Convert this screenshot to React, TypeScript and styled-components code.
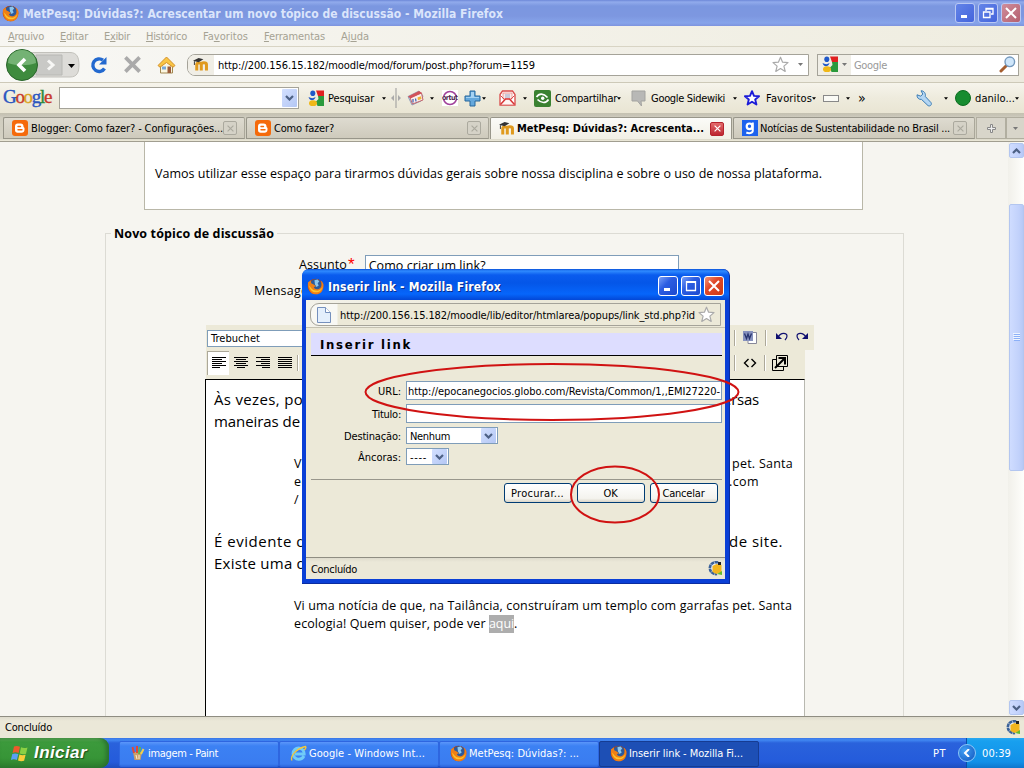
import React, { useLayoutEffect, useRef, useState } from 'react';
import styled, { createGlobalStyle, css } from 'styled-components';

const tahoma = '"DejaVu Sans Condensed", "DejaVu Sans", Tahoma, sans-serif';
const trebuchet = '"Open Sans", "Noto Sans", sans-serif';

const Global = createGlobalStyle`
  *, *::before, *::after { box-sizing: border-box; }
  body { margin: 0; overflow: hidden; font-family: ${tahoma}; font-size: 11px; color: #000; }
  svg { display: block; flex: none; }
`;

/* Text tracked at run time so that it fills a given width. */
const Label = styled.span<{ $size?: number; $bold?: boolean; $color?: string; $face?: string }>`
  display: inline-block;
  flex: none;
  white-space: pre;
  font-size: ${p => p.$size ?? 11}px;
  font-weight: ${p => (p.$bold ? 700 : 400)};
  ${p => p.$color && css`color: ${p.$color};`}
  ${p => p.$face && css`font-family: ${p.$face};`}
`;

type FitProps = {
  w: number;
  size?: number;
  bold?: boolean;
  color?: string;
  face?: string;
  className?: string;
  children: React.ReactNode;
};

function Fit({ w, size, bold, color, face, className, children }: FitProps) {
  const ref = useRef<HTMLSpanElement>(null);
  const [spacing, setSpacing] = useState(0);
  useLayoutEffect(() => {
    const el = ref.current;
    if (!el) return;
    el.style.letterSpacing = '0px';
    const natural = el.getBoundingClientRect().width;
    const next = (w - natural) / (el.textContent || ' ').length;
    el.style.letterSpacing = `${next}px`;
    setSpacing(next);
  }, [w]);
  return (
    <Label ref={ref} className={className} $size={size} $bold={bold} $color={color} $face={face}
      style={{ letterSpacing: `${spacing}px` }}>
      {children}
    </Label>
  );
}

const Spacer = styled.div<{ $w?: number }>`
  ${p => (p.$w === undefined ? 'flex: 1;' : `flex: none; width: ${p.$w}px;`)}
`;

/* ---------- main window ---------- */
const Desktop = styled.div`
  position: relative;
  width: 1024px;
  height: 768px;
  display: flex;
  flex-direction: column;
  overflow: hidden;
  background: #f5f5f0;
`;
const TitleBar = styled.header`
  height: 26px;
  flex: none;
  display: flex;
  align-items: center;
  padding: 0 3px 0 2px;
  background: linear-gradient(#6d88d8 0, #91abec 2px, #7b97e0 6px, #7d97e0 16px, #86a4ea 23px, #7d93de 26px);
`;
const TitleText = styled(Fit)`
  margin-left: 4px;
  padding-top: 1px;
`;
const WinButton = styled.span<{ $close?: boolean; $idle?: boolean }>`
  width: 20px;
  height: 20px;
  margin-left: 3px;
  flex: none;
  display: flex;
  align-items: center;
  justify-content: center;
  border: 1px solid ${p => (p.$idle ? '#b9c8f4' : '#fff')};
  border-radius: 3px;
  background: ${p =>
    p.$idle
      ? p.$close ? 'linear-gradient(135deg, #cf8d9b, #b5606f)' : 'linear-gradient(135deg, #6384e8, #4464dc)'
      : p.$close ? 'linear-gradient(135deg, #f09478, #e0492a 40%, #cc3a14)' : 'linear-gradient(135deg, #7aa0f8, #2c5de2 40%, #1c49cf)'};
`;
const MenuBar = styled.nav`
  height: 21px;
  flex: none;
  display: flex;
  align-items: center;
  gap: 16px;
  padding-left: 8px;
  background: linear-gradient(90deg, #f7f6f2, #efede0);
  border-bottom: 1px solid #d8d4c4;
`;
const NavBar = styled.div`
  height: 36px;
  flex: none;
  display: flex;
  align-items: center;
  background: linear-gradient(90deg, #f8f8f5, #edeade);
  border-bottom: 1px solid #cdc9b8;
`;
const Field = styled.div<{ $w: number; $round?: boolean }>`
  width: ${p => p.$w}px;
  height: 22px;
  flex: none;
  display: flex;
  align-items: center;
  background: #fff;
  border: 1px solid #a5a399;
  ${p => p.$round && 'border-radius: 8px 0 0 8px;'}
  overflow: hidden;
  ${Label} { padding-top: 2px; }
`;
const FavSlot = styled.div<{ $w: number }>`
  width: ${p => p.$w}px;
  height: 20px;
  flex: none;
  display: flex;
  align-items: center;
  justify-content: center;
  gap: 3px;
  background: #f0eee6;
`;
const GoogleBar = styled.div`
  height: 30px;
  flex: none;
  display: flex;
  align-items: center;
  padding-left: 3px;
  background: linear-gradient(#f6f4ec, #eeebdd 50%, #e9e5d3);
`;
const Logo = styled(Fit)`
  -webkit-text-stroke: 0.4px;
  margin-top: -3px;
`;
const Tint = styled.span<{ $c: string }>`
  color: ${p => p.$c};
`;
const TabStrip = styled.div`
  height: 29px;
  flex: none;
  display: flex;
  align-items: flex-end;
  padding: 0 0 2px 3px;
  background: linear-gradient(#c4c1b1 0, #c9c6b8 3px, #d0cdbf 4px, #d4d1c3 26px, #e9e6d6 27px);
  border-bottom: 1px solid #a19e90;
`;
const Tab = styled.div<{ $w: number; $active?: boolean }>`
  width: ${p => p.$w}px;
  height: 22px;
  flex: none;
  display: flex;
  align-items: center;
  padding: 0 6px 0 8px;
  border: 1px solid #98968a;
  border-bottom-width: ${p => (p.$active ? 0 : 1)}px;
  border-right-color: ${p => (p.$active ? '#98968a' : '#aaa79a')};
  border-radius: 2px 2px 0 0;
  margin-right: 1px;
  background: ${p => (p.$active ? 'linear-gradient(#fbfbf8, #f1efe5)' : 'linear-gradient(#dedbd0, #cecabc)')};
`;
const TabClose = styled.span<{ $active?: boolean }>`
  width: 14px;
  height: 14px;
  flex: none;
  display: flex;
  align-items: center;
  justify-content: center;
  margin-right: 1px;
  border: 1px solid ${p => (p.$active ? '#b5232c' : '#aba99e')};
  border-radius: 2px;
  background: ${p => (p.$active ? 'linear-gradient(#e36b6b, #bd2530)' : '#d5d2c7')};
`;
const StripButton = styled.div<{ $w: number }>`
  width: ${p => p.$w}px;
  height: 22px;
  flex: none;
  display: flex;
  align-items: center;
  justify-content: center;
  border: 1px solid #b1aea0;
  background: #d8d5ca;
`;

/* ---------- page ---------- */
const View = styled.main`
  height: 574px;
  flex: none;
  display: flex;
  overflow: hidden;
`;
const Page = styled.div`
  width: 1008px;
  height: 574px;
  overflow: hidden;
  background: #f6f5f0;
`;
const Intro = styled.section`
  width: 719px;
  height: 68px;
  margin-left: 144px;
  padding: 23px 0 0 10px;
  background: #fff;
  border: 1px solid #b9b7a8;
  border-top: 0;
`;
const Fieldset = styled.fieldset`
  width: 799px;
  height: 540px;
  margin: 15px 0 0 105px;
  padding: 0;
  border: 1px solid #dcdbd4;
`;
const Legend = styled.legend`
  height: 17px;
  margin-left: 5px;
  padding: 0 3px;
  line-height: 17px;
`;
const FormRow = styled.div<{ $pad: number; $h: number }>`
  display: flex;
  align-items: center;
  height: ${p => p.$h}px;
  padding-left: ${p => p.$pad}px;
`;
const Subject = styled.div`
  width: 314px;
  height: 21px;
  margin: 3px 0 0 10px;
  padding-left: 3px;
  line-height: 19px;
  border: 1px solid #7f9db9;
  background: #fff;
`;
const Star = styled.span`
  color: #f00;
  font: 17px/17px "Liberation Sans", sans-serif;
  margin-left: 1px;
`;
const Editor = styled.div`
  width: 609px;
  margin: 31px 0 0 99px;
`;
const Tools = styled.div<{ $w: number; $h: number; $pad?: number }>`
  width: ${p => p.$w}px;
  height: ${p => p.$h}px;
  margin-left: 1px;
  padding-bottom: ${p => p.$pad ?? 0}px;
  display: flex;
  align-items: center;
  background: #ece9d8;
`;
const FontBox = styled.div`
  width: 120px;
  height: 17px;
  margin: 2px 0 0 1px;
  padding-left: 3px;
  line-height: 15px;
  background: #fff;
  border: 1px solid #7f9db9;
`;
const AlignButton = styled.span<{ $on?: boolean }>`
  width: 22px;
  height: 24px;
  display: flex;
  align-items: center;
  justify-content: center;
  background: ${p => (p.$on ? '#fff' : 'transparent')};
  border-top: 1px solid ${p => (p.$on ? '#aca899' : 'transparent')};
  border-left: 1px solid ${p => (p.$on ? '#aca899' : 'transparent')};
`;
const Divider = styled.span<{ $h?: number }>`
  width: 2px;
  height: ${p => p.$h ?? 16}px;
  flex: none;
  border-left: 1px solid #aca899;
  border-right: 1px solid #fff;
`;
const Paper = styled.div`
  width: 600px;
  height: 360px;
  padding: 8px 0 0 8px;
  background: #fff;
  border: 1px solid #b8b8b0;
  border-top: 1px solid #000;
  border-left: 1px solid #000;
`;
const Line = styled.div<{ $h: number; $pad?: number; $w?: number; $gap?: number }>`
  width: ${p => p.$w ?? 590}px;
  height: ${p => p.$h}px;
  line-height: ${p => p.$h}px;
  padding-left: ${p => p.$pad ?? 0}px;
  margin-bottom: ${p => p.$gap ?? 0}px;
  display: flex;
  justify-content: space-between;
`;
const Words = styled.span`
  display: flex;
`;
const Selected = styled.span`
  background: #adadad;
  color: #fff;
  height: 18px;
  display: flex;
`;

const ScrollBar = styled.aside`
  width: 16px;
  display: flex;
  flex-direction: column;
  align-items: center;
  padding: 1px 0 2px;
  background: linear-gradient(90deg, #f1f0ea, #fefefb);
`;
const ScrollKey = styled.span<{ $h: number; $mt?: number }>`
  width: 15px;
  height: ${p => p.$h}px;
  margin-top: ${p => p.$mt ?? 0}px;
  flex: none;
  display: flex;
  align-items: center;
  justify-content: center;
  border: 1px solid #b3c6f0;
  border-radius: 2px;
  background: linear-gradient(90deg, #cfdcff, #c1d1fb 70%, #b7c8f6);
`;
const StatusBar = styled.footer`
  height: 22px;
  flex: none;
  display: flex;
  align-items: center;
  padding: 0 3px 0 5px;
  border-top: 1px solid #8f8d82;
  background: linear-gradient(#dedbcd 0, #ebe8d8 4px, #ebe8d8);
`;

/* ---------- taskbar ---------- */
const TaskBar = styled.footer`
  height: 30px;
  flex: none;
  display: flex;
  align-items: center;
  background: linear-gradient(#3a75e6 0, #4188f2 2px, #2a62dc 5px, #245bdb 24px, #1e4dbd 30px);
`;
const Start = styled.div`
  width: 109px;
  height: 30px;
  flex: none;
  display: flex;
  align-items: center;
  gap: 5px;
  padding-left: 10px;
  margin-right: 10px;
  border-radius: 0 9px 9px 0;
  background: linear-gradient(#5eac56 0, #3c9a3c 4px, #379537 20px, #2c7c2c 30px);
  box-shadow: inset -3px 0 4px #2a7030;
`;
const StartText = styled(Fit)`
  font-style: italic;
  text-shadow: 1px 1px 1px #1d4f1d;
`;
const Task = styled.div<{ $on?: boolean }>`
  width: 160px;
  height: 26px;
  margin-top: 2px;
  padding-bottom: 2px;
  flex: none;
  display: flex;
  align-items: center;
  gap: 2px;
  padding-left: 10px;
  border-radius: 2px;
  border: 1px solid ${p => (p.$on ? '#163c92' : '#2e66e0')};
  background: ${p => (p.$on ? '#1d4fb5' : 'linear-gradient(#5b96fa 0, #3c81f3 4px, #3a7cf0 22px, #2f6ce0)')};
`;
const Tray = styled.div`
  width: 58px;
  height: 30px;
  flex: none;
  display: flex;
  align-items: center;
  border-left: 1px solid #0a4ea8;
  background: linear-gradient(#2aa8f0 0, #18a0ef 3px, #1290e8 24px, #0f76cc);
`;
const TrayArrow = styled.span`
  width: 18px;
  height: 18px;
  margin: 0 6px 0 -9px;
  flex: none;
  display: flex;
  align-items: center;
  justify-content: center;
  border-radius: 50%;
  border: 1px solid #8cc8f8;
  background: radial-gradient(circle at 35% 35%, #3fa0f5, #1254bd);
`;

/* ---------- dialog ---------- */
const Dialog = styled.div`
  position: absolute;
  left: 302px;
  top: 269px;
  width: 428px;
  height: 315px;
  display: flex;
  flex-direction: column;
  padding: 0 4px 4px;
  border-radius: 7px 7px 0 0;
  background: #0a3fd6;
  border: solid #0a2ca0;
  border-width: 0 1px 1px 0;
`;
const DialogTitle = styled.header`
  height: 31px;
  flex: none;
  display: flex;
  align-items: center;
  margin: 0 -4px 0;
  padding: 3px 5px 0 5px;
  border-radius: 7px 7px 0 0;
  background: linear-gradient(#0a50d8 0, #2f8bff 2px, #0a5cee 6px, #0456e8 14px, #0666fb 25px, #0347d6 31px);
`;
const DialogName = styled(Fit)`
  margin-left: 4px;
  padding-top: 1px;
  text-shadow: 1px 1px 0 #0a2f8a;
`;
const DialogBody = styled.div`
  flex: 1;
  display: flex;
  flex-direction: column;
  background: #ece9d8;
`;
const AddressRow = styled.div`
  height: 28px;
  flex: none;
  padding: 3px 4px 0;
  background: linear-gradient(90deg, #f3f2ea, #ece9d8 50%);
  border-bottom: 1px solid #c5c2b2;
`;
const Address = styled.div`
  height: 23px;
  width: 411px;
  display: flex;
  align-items: center;
  border: 1px solid #a5a399;
  border-radius: 9px 0 0 9px;
  background: linear-gradient(90deg, #f8f8f4 26px, #ece9d8 27px);
  ${Label} { padding-top: 1px; }
`;
const DialogHeading = styled.div`
  height: 23px;
  width: 411px;
  flex: none;
  margin: 5px 0 25px 5px;
  padding-left: 9px;
  line-height: 23px;
  background: #ddddff;
  border-bottom: 1px solid #000;
`;
const DialogRow = styled.div<{ $h: number; $gap: number }>`
  height: ${p => p.$h}px;
  margin-bottom: ${p => p.$gap}px;
  flex: none;
  display: flex;
  align-items: center;
  ${Label} { padding-top: 2px; }
`;
const RowLabel = styled.span`
  width: 95px;
  flex: none;
  display: flex;
  justify-content: flex-end;
`;
const Box = styled.span<{ $w: number }>`
  width: ${p => p.$w}px;
  height: 100%;
  margin-left: 5px;
  padding: 0 1px 0 1px;
  display: flex;
  align-items: center;
  justify-content: space-between;
  background: #fff;
  border: 1px solid #7f9db9;
`;
const Drop = styled.span<{ $h?: number }>`
  width: 15px;
  height: ${p => p.$h ?? 15}px;
  flex: none;
  display: flex;
  align-items: center;
  justify-content: center;
  border-radius: 1px;
  background: linear-gradient(135deg, #d3e0ff, #b4c7f4);
`;
const Rule = styled.div`
  width: 411px;
  height: 1px;
  flex: none;
  margin: 0 0 3px 5px;
  background: #99978c;
`;
const Buttons = styled.div`
  display: flex;
  gap: 5px;
  padding-left: 198px;
  flex: 1;
`;
const Button = styled.span`
  width: 68px;
  height: 20px;
  display: flex;
  align-items: center;
  justify-content: center;
  padding-right: 1px;
  border: 1px solid #003c74;
  border-radius: 3px;
  background: linear-gradient(#fff, #f4f3ee 80%, #d9d5c8);
`;
const DialogStatus = styled.div`
  height: 22px;
  flex: none;
  display: flex;
  align-items: center;
  padding: 0 2px 0 5px;
  border-top: 1px solid #8f8d82;
  background: linear-gradient(#dedbcd 0, #ebe8d8 4px, #ebe8d8);
  ${Label} { padding-top: 2px; }
`;
const Marks = styled.svg`
  position: absolute;
  left: 0;
  top: 0;
  pointer-events: none;
`;

/* ---------- drawings ---------- */
const Svg = ({ w, h = w, box, children }: { w: number; h?: number; box?: string; children: React.ReactNode }) => (
  <svg width={w} height={h} viewBox={box ?? `0 0 ${w} ${h}`} fill="none">{children}</svg>
);
const Firefox = () => (
  <Svg w={17} box="0 0 16 16">
    <circle cx="8" cy="8" r="7.3" fill="#b8400c" />
    <circle cx="8.3" cy="6.6" r="5.6" fill="#2c5a9c" />
    <path d="M7 2l3-.6 1.5 2L10 5l1 2-2 1.500L7.500 6z" fill="#8dc6ec" />
    <path d="M1 4C.2 9 2.500 15.300 8 15.300S15.800 11 15.500 6c-.6-2-1.500-3-2.500-3.500 1.500 4 .5 7.500-3 8-2 .3-3.500-.8-3.500-2l2-.7L6.300 6 4 5 3.500 2 1.800 3.500z" fill="#ef7f16" />
    <path d="M2 7c.5 4 3 6.500 6.500 6.500s5.500-2 6-5c-1.500 3-4 3.800-6.500 3.300C5 11.300 3.500 9 2 7z" fill="#fdc52c" />
  </Svg>
);
const Caret = ({ c = '#000', s = 5 }: { c?: string; s?: number }) => (
  <Svg w={s} h={3} box="0 0 5 3"><path d="M0 0h5L2.500 3z" fill={c} /></Svg>
);
const Chevron = ({ up }: { up?: boolean }) => (
  <Svg w={9} h={6}><path d={up ? 'M1 5l3.500-3.500L8 5' : 'M1 1l3.500 3.500L8 1'} stroke="#4d6185" strokeWidth="2.200" /></Svg>
);
const MinIcon = () => <Svg w={12}><path d="M2 9.500h6" stroke="#fff" strokeWidth="3" /></Svg>;
const MaxIcon = () => <Svg w={12}><path d="M1 2h10M1.500 1v10M10.500 1v10M1 10.500h10" stroke="#fff" strokeWidth="1.300" /><path d="M1 2h10" stroke="#fff" strokeWidth="2" /></Svg>;
const RestoreIcon = () => <Svg w={12}><path d="M4 4V1.500h7V7H9M4 2h7" stroke="#fff" strokeWidth="1.300" /><path d="M1.500 5h6.500v5.500H1.500zM1 5h7" stroke="#fff" strokeWidth="1.300" /></Svg>;
const XIcon = ({ s = 12, c = '#fff', t = 2 }: { s?: number; c?: string; t?: number }) => (
  <Svg w={s} box="0 0 12 12"><path d="M1 1l10 10M11 1L1 11" stroke={c} strokeWidth={t} /></Svg>
);
const Moodle = () => (
  <Svg w={16} h={15} box="0 0 17 15">
    <path d="M4 14V7.500c0-2 4.800-2.300 4.800 0V14M8.800 7.500c0-2.500 5.500-2.500 5.500 0V14" stroke="#e09a1e" strokeWidth="3.200" />
    <path d="M0 3.500L6 .5l5 1.500-5 3z" fill="#333" /><path d="M1.500 4v4" stroke="#333" />
  </Svg>
);
const StarIcon = ({ c = '#aaa', t = 1.2, s = 17 }: { c?: string; t?: number; s?: number }) => (
  <Svg w={s} box="0 0 17 17"><path d="M8.500 1.200l2.100 5 5.400.4-4.100 3.500 1.300 5.300-4.700-2.900-4.700 2.900 1.300-5.300L1 6.600l5.400-.4z" fill="#fff" stroke={c} strokeWidth={t} strokeLinejoin="round" /></Svg>
);
const GoogleG = () => (
  <Svg w={17} h={17}>
    <path d="M8 .5h8V6h-6z" fill="#e02020" /><path d="M10 6h6v10H9.500L8 11.500 10.500 9z" fill="#2a9a3c" />
    <ellipse cx="4.800" cy="3.300" rx="2.500" ry="2.800" fill="#2058c8" /><path d="M.5 7c2.500 1.500 5 1.500 7 0-.5 3.500-5.500 5-7 0z" fill="#2058c8" />
    <ellipse cx="5" cy="13.200" rx="4" ry="2.900" fill="#f0b818" />
  </Svg>
);
const Blogger = () => (
  <Svg w={16}>
    <rect width="16" height="16" rx="3" fill="#f56a0b" />
    <path d="M5.500 3.500h3c2 0 3 1.200 3 3 0 1 1 .8 1 1.700v1.500c0 2-1.200 3-3 3h-4c-1.500 0-2.500-1-2.500-2.700V6.500c0-2 1-3 2.500-3z" fill="#fff" />
    <path d="M6 6.500h2.500M6 9.700h4" stroke="#f56a0b" strokeWidth="1.400" strokeLinecap="round" />
  </Svg>
);
const BackForward = () => (
  <Svg w={80} h={34}>
    <path d="M24 4.500h46c7 0 9 5 9 12.500s-2 12-9 12H24z" fill="#dddcd8" stroke="#c2c1bb" />
    <path d="M36 7h26v20H36z" fill="#c9c9c6" stroke="#b8b8b4" />
    <path d="M48 12.500l5 4.500-5 4.500" stroke="#f7f7f5" strokeWidth="3" />
    <path d="M68 16h7l-3.500 4z" fill="#000" />
    <circle cx="22" cy="17" r="15.500" fill="#3e8b3e" stroke="#2b652d" />
    <path d="M8 15a14 13 0 0 1 28 0c-8 3-20 3-28 0z" fill="#74b274" />
    <path d="M25 11l-6 6 6 6" stroke="#fff" strokeWidth="3.600" />
  </Svg>
);
const Reload = () => (
  <Svg w={18}>
    <path d="M14.500 12.500A6.300 6.300 0 1 1 13 4.200" stroke="#2369cf" strokeWidth="3.400" /><path d="M16.500 1v7.500H9z" fill="#2369cf" />
  </Svg>
);
const Home = () => (
  <Svg w={19} h={18}>
    <path d="M3.500 9v8h12V9L9.500 4z" fill="#fbf6df" stroke="#a28850" />
    <path d="M9.500 1L18 9.500l-2 1.700-6.500-4.700L3 11.200 1 9.500z" fill="#f9c544" stroke="#d3902a" />
    <path d="M5 10.500h4v3H5z" fill="#78a8d8" /><path d="M10.500 10.500H14V17h-3.500z" fill="#9b5c3a" />
  </Svg>
);
const Magnifier = () => (
  <Svg w={17}><path d="M2 15l5-5" stroke="#a55e30" strokeWidth="3" strokeLinecap="round" /><circle cx="10.800" cy="5.800" r="4.800" fill="#cfe6fa" stroke="#7599bd" strokeWidth="1.400" /></Svg>
);
const News = () => (
  <Svg w={17} h={16}>
    <path d="M1 6.500L12 1l4 5-2 5-9 4z" fill="#c7d3ea" stroke="#8290ae" strokeWidth=".8" />
    <path d="M3 7.500L14.500 3l1.500 7-10.500 4z" fill="#fbeeea" stroke="#c2666c" />
    <path d="M1 6.500L12 1l3 2L3.500 8.500z" fill="#d2525a" />
    <path d="M6 9v3.500M8.500 8.500l.5 3" stroke="#4867b4" strokeWidth="1.300" /><path d="M10.500 7.500l3.500-1.300.5 2.800-3.500 1.300z" fill="#efb23a" />
  </Svg>
);
const Plus = () => <Svg w={17}><path d="M6 1h5v5h5v5h-5v5H6v-5H1V6h5z" fill="#65a8dc" stroke="#27669c" /><path d="M7 2h3v5h5v1H2V7h5z" fill="#a6d2f2" /></Svg>;
const Mail = () => (
  <Svg w={17} h={16}>
    <path d="M1 4.500L3.500 1h10L16 4.500V15H1z" fill="#fff" stroke="#d94a4a" strokeWidth="1.300" />
    <path d="M4 3h9v6H4z" fill="#fde9e6" stroke="#e58a8a" strokeWidth=".8" />
    <path d="M6 5h5M6 7h5" stroke="#8aa0c8" strokeWidth=".9" />
    <path d="M1.500 5.500L5 9M15.500 5.500L12 9" stroke="#d94a4a" />
    <path d="M1.500 14.500l5-5.500h4l5 5.500" fill="#fff5f3" stroke="#d93535" strokeWidth="1.500" />
  </Svg>
);
const Share = () => (
  <Svg w={17}>
    <rect width="17" height="17" rx="2" fill="#3a8131" />
    <path d="M2.500 7C5 3 9.500 3 13.500 7.500" stroke="#fff" strokeWidth="1.700" /><path d="M14.500 9.500c-2.500 4-7 4-11 0" stroke="#fff" strokeWidth="1.700" />
    <circle cx="8.700" cy="8.300" r="1.700" fill="#fff" />
  </Svg>
);
const Bubble = () => <Svg w={15} h={17}><path d="M1 1h13v10H10l.5 5-4-5H1z" fill="#b8b8b6" stroke="#a3a3a0" /></Svg>;
const Wrench = () => (
  <Svg w={17}><path d="M5 .8L6.800 4 4.800 6.200 1 4.800c-.3 3 2 5 4.500 4.600l6.500 6.200c2.200 1.200 4.200-1 3-3L9.300 6.500C10 3.500 8 .6 5 .8z" fill="#b4d6f3" stroke="#3c7db5" /></Svg>
);
const Paint = () => (
  <Svg w={16}><path d="M3 7l1.500 8h6L12 7z" fill="#c9a06a" /><path d="M4 8L2.500 2M7 8V1" stroke="#e04a3a" strokeWidth="2" /><path d="M9 9l1-7" stroke="#5cb84c" strokeWidth="2" /><path d="M11 9l2.500-5" stroke="#f3d14a" strokeWidth="2" /><path d="M6 10l1 4M9 10v4" stroke="#fff0cc" /></Svg>
);
const IE = () => (
  <Svg w={17}><path d="M14 11c-1 2-3 3.200-5.200 3.200A5.600 5.600 0 1 1 14.200 9H5" stroke="#70ccf8" strokeWidth="2.900" /><path d="M2 15.500C0 12 5 4 15.500 1.500 17 3 14 5 14 5" stroke="#f5c83a" strokeWidth="1.300" /></Svg>
);
const WindowsFlag = () => (
  <Svg w={19} h={17}>
    <path d="M4 1.500c2-1 4-.6 6 .3L8.600 8c-2-.9-4-1-6-.1z" fill="#ee5a2c" /><path d="M11 2.200c2 .9 4 1 6.500.2L16 8.700c-2.300.8-4.300.6-6.300-.2z" fill="#8bd044" />
    <path d="M2.300 9c2-.9 4-.7 6 .1L6.900 15c-2-.9-4-1-6-.1z" fill="#5aa0f4" /><path d="M9.400 9.600c2 .8 4 .9 6.200.2l-1.500 6c-2.200.8-4.200.5-6.100-.3z" fill="#fbcd3a" />
  </Svg>
);
const StatusIcon = () => (
  <Svg w={15}><path d="M10 1.500A6 6 0 1 0 9 13" fill="#e8eef6" stroke="#3b6299" strokeWidth="2.600" strokeDasharray="3.500 .5" /><path d="M4.500 5l4-2 5 1v7l-5 2-4-2z" fill="#f2b51d" /><path d="M10 1h3v3h-3z" fill="#222" /><path d="M9 13l5-3v4z" fill="#64bd2c" /></Svg>
);
const AlignIcon = ({ rows }: { rows: [number, number][] }) => (
  <Svg w={14} h={12}>{rows.map(([a, b], i) => <path key={i} d={`M${a} ${i * 2 + 0.5}H${b}`} stroke="#000" />)}</Svg>
);
const LEFT: [number, number][] = [[0, 14], [0, 10], [0, 14], [0, 10], [0, 14], [0, 8]];
const MID: [number, number][] = [[0, 14], [2, 12], [0, 14], [2, 12], [0, 14], [3, 11]];
const RIGHT: [number, number][] = [[0, 14], [5, 14], [0, 14], [5, 14], [0, 14], [6, 14]];
const FULL: [number, number][] = [[0, 14], [0, 14], [0, 14], [0, 14], [0, 14], [0, 14]];

const menus: [string, string, string, number][] = [
  ['', 'A', 'rquivo', 36], ['', 'E', 'ditar', 28], ['E', 'x', 'ibir', 26], ['', 'H', 'istórico', 41],
  ['Fa', 'v', 'oritos', 45], ['', 'F', 'erramentas', 61], ['Aj', 'u', 'da', 28],
];

export default function App() {
  return (
    <Desktop>
      <Global />
      <TitleBar>
        <Firefox />
        <TitleText w={480} size={12} bold color="#dbe5fb">MetPesq: Dúvidas?: Acrescentar um novo tópico de discussão - Mozilla Firefox</TitleText>
        <Spacer />
        <WinButton $idle><MinIcon /></WinButton>
        <WinButton $idle><RestoreIcon /></WinButton>
        <WinButton $idle $close><XIcon /></WinButton>
      </TitleBar>
      <MenuBar>
        {menus.map(([a, u, b, w]) => <Fit key={u + b} w={w} color="#a5a293">{a}<u>{u}</u>{b}</Fit>)}
      </MenuBar>
      <NavBar>
        <BackForward />
        <Spacer $w={10} /><Reload />
        <Spacer $w={16} /><XIcon s={17} c="#aaa" t={2.6} />
        <Spacer $w={16} /><Home />
        <Spacer $w={11} />
        <Field $w={622} $round>
          <FavSlot $w={26}><Moodle /></FavSlot>
          <Spacer $w={4} />
          <Fit w={317}>http://200.156.15.182/moodle/mod/forum/post.php?forum=1159</Fit>
          <Spacer /><StarIcon /><Spacer $w={9} /><Caret c="#777" /><Spacer $w={5} />
        </Field>
        <Spacer $w={8} />
        <Field $w={202}>
          <FavSlot $w={33}><GoogleG /><Caret c="#777" /></FavSlot>
          <Spacer $w={3} />
          <Fit w={33} color="#999">Google</Fit>
          <Spacer /><Magnifier /><Spacer $w={2} />
        </Field>
      </NavBar>
      <GoogleBar>
        <Logo w={48} size={19} face='"Liberation Serif", serif'>
          <Tint $c="#2a56c0">G</Tint><Tint $c="#c8392c">o</Tint><Tint $c="#d9a21c">o</Tint><Tint $c="#2a56c0">g</Tint><Tint $c="#2b8a3c">l</Tint><Tint $c="#c8392c">e</Tint>
        </Logo>
        <Spacer $w={8} />
        <Field $w={240}><Spacer /><Drop $h={18}><Chevron /></Drop><Spacer $w={1} /></Field>
        <Spacer $w={9} /><GoogleG /><Spacer $w={3} /><Fit w={46}>Pesquisar</Fit>
        <Spacer $w={8} /><Caret s={4} /><Spacer $w={5} />
        <Svg w={10} h={20}><path d="M5 0v20" stroke="#999" /><path d="M3 7l-3 3 3 3zM7 7l3 3-3 3z" fill="#aaa" /></Svg>
        <Spacer $w={6} /><News /><Spacer $w={6} /><Caret s={4} />
        <Spacer $w={8} />
        <Svg w={16}><rect width="16" height="16" fill="#fff" /><circle cx="8" cy="8" r="6.500" stroke="#a0409a" strokeWidth="1.500" /><path d="M0 6h16v4H0z" fill="#fff" /><text x="0" y="10" fontSize="7" fontWeight="700" fill="#4c2452" textLength="16">ortut</text></Svg>
        <Spacer $w={6} /><Plus /><Spacer $w={1} /><Caret s={4} />
        <Spacer $w={13} /><Mail /><Spacer $w={7} /><Caret s={4} />
        <Spacer $w={7} /><Share /><Spacer $w={4} /><Fit w={62}>Compartilhar</Fit><Caret s={4} />
        <Spacer $w={10} /><Bubble /><Spacer $w={5} /><Fit w={74}>Google Sidewiki</Fit><Spacer $w={8} /><Caret s={4} />
        <Spacer $w={7} /><StarIcon c="#1b1bd8" t={2} s={16} /><Spacer $w={6} /><Fit w={46}>Favoritos</Fit><Caret s={4} />
        <Spacer $w={7} /><Svg w={16} h={7}><rect x=".5" y=".5" width="15" height="6" fill="#fafaf5" stroke="#888" /></Svg>
        <Spacer $w={7} /><Caret s={4} />
        <Spacer $w={8} /><Fit w={10} size={14}>»</Fit>
        <Spacer $w={48} /><Wrench /><Spacer $w={11} /><Caret s={4} />
        <Spacer $w={7} /><Svg w={16}><circle cx="8" cy="8" r="7.500" fill="#178c30" stroke="#0d6d20" /></Svg>
        <Spacer $w={4} /><Fit w={40}>danilo...</Fit><Caret s={4} />
      </GoogleBar>
      <TabStrip>
        <Tab $w={242}><Blogger /><Spacer $w={3} /><Fit w={192}>Blogger: Como fazer? - Configurações...</Fit><Spacer /><TabClose><XIcon s={7} c="#aba99e" /></TabClose></Tab>
        <Tab $w={243}><Blogger /><Spacer $w={3} /><Fit w={60}>Como fazer?</Fit><Spacer /><TabClose><XIcon s={7} c="#aba99e" /></TabClose></Tab>
        <Tab $w={242} $active><Moodle /><Spacer $w={2} /><Fit w={187} bold>MetPesq: Dúvidas?: Acrescenta...</Fit><Spacer /><TabClose $active><XIcon s={7} c="#fff" /></TabClose></Tab>
        <Tab $w={242}>
          <Svg w={16}><rect width="16" height="16" fill="#1d62ee" /><circle cx="7.500" cy="6.300" r="2.800" stroke="#fff" strokeWidth="2.200" /><path d="M10.800 2.500v8c0 3-4 3.200-6.500 2" stroke="#fff" strokeWidth="2" /></Svg>
          <Spacer $w={2} /><Fit w={190}>Notícias de Sustentabilidade no Brasil ...</Fit><Spacer /><TabClose><XIcon s={7} c="#aba99e" /></TabClose>
        </Tab>
        <StripButton $w={30}><Svg w={9}><path d="M3.500 .5h2v3h3v2h-3v3h-2v-3h-3v-2h3z" fill="#eee" stroke="#888" /></Svg></StripButton>
        <StripButton $w={19}><Caret c="#777" /></StripButton>
      </TabStrip>

      <View>
        <Page>
          <Intro><Fit w={667} size={12.5} face={trebuchet}>Vamos utilizar esse espaço para tirarmos dúvidas gerais sobre nossa disciplina e sobre o uso de nossa plataforma.</Fit></Intro>
          <Fieldset>
            <Legend><Fit w={160} size={12.5} bold face={trebuchet}>Novo tópico de discussão</Fit></Legend>
            <FormRow $pad={193} $h={44}><Fit w={48} size={12.5} face={trebuchet}>Assunto</Fit><Star>*</Star><Subject><Fit w={117} size={12.5} face={trebuchet}>Como criar um link?</Fit></Subject></FormRow>
            <FormRow $pad={148} $h={8}><Fit w={66} size={12.5} face={trebuchet}>Mensagem</Fit></FormRow>
            <Editor>
              <EditorTop />
            </Editor>
          </Fieldset>
        </Page>
        <ScrollBar>
          <ScrollKey $h={15}><Chevron up /></ScrollKey>
          <ScrollKey $h={267} $mt={46}><Svg w={7} h={9}><path d="M0 .5h7M0 2.500h7M0 4.500h7M0 6.500h7" stroke="#eef4fe" /><path d="M1 1.500h7M1 3.500h7M1 5.500h7M1 7.500h7" stroke="#8cb0f8" /></Svg></ScrollKey>
          <ScrollKey $h={15} $mt={229}><Chevron /></ScrollKey>
        </ScrollBar>
      </View>
      <StatusBar><Fit w={47}>Concluído</Fit><Spacer /><StatusIcon /></StatusBar>
      <TaskBar>
        <Start><WindowsFlag /><StartText w={53} size={17} bold color="#fff" face='"Liberation Sans", sans-serif'>Iniciar</StartText></Start>
        <Task><Paint /><Fit w={70} color="#fff">imagem - Paint</Fit></Task>
        <Task><IE /><Fit w={116} color="#fff">Google - Windows Int...</Fit></Task>
        <Task><Firefox /><Fit w={110} color="#fff">MetPesq: Dúvidas?: ...</Fit></Task>
        <Task $on><Firefox /><Fit w={114} color="#fff">Inserir link - Mozilla Fi...</Fit></Task>
        <Spacer /><Fit w={13} color="#fff">PT</Fit><Spacer $w={20} />
        <Tray><TrayArrow><Svg w={8}><path d="M6 0L2 4l4 4" stroke="#fff" strokeWidth="2" /></Svg></TrayArrow><Fit w={29} color="#fff">00:39</Fit></Tray>
      </TaskBar>

      <Dialog>
        <DialogTitle>
          <Firefox />
          <DialogName w={173} size={12} bold color="#fff">Inserir link - Mozilla Firefox</DialogName>
          <Spacer />
          <WinButton><MinIcon /></WinButton><WinButton><MaxIcon /></WinButton><WinButton $close><XIcon /></WinButton>
        </DialogTitle>
        <DialogBody>
          <AddressRow>
            <Address>
              <Spacer $w={6} />
              <Svg w={14} h={16}><path d="M.5.500h8l5 5v10H.5z" fill="#e4effc" stroke="#7590bd" /><path d="M8.500.500v5h5" fill="#fff" stroke="#7590bd" /></Svg>
              <Spacer $w={9} /><Fit w={355}>http://200.156.15.182/moodle/lib/editor/htmlarea/popups/link_std.php?id</Fit>
              <Spacer $w={3} /><StarIcon />
            </Address>
          </AddressRow>
          <DialogHeading><Fit w={92} size={13} bold>Inserir link</Fit></DialogHeading>
          <DialogRow $h={19} $gap={4}><RowLabel><Fit w={23}>URL:</Fit></RowLabel><Box $w={316}><Fit w={312}>http://epocanegocios.globo.com/Revista/Common/1,,EMI27220-</Fit></Box></DialogRow>
          <DialogRow $h={19} $gap={4}><RowLabel><Fit w={29}>Titulo:</Fit></RowLabel><Box $w={316} /></DialogRow>
          <DialogRow $h={17} $gap={4}><RowLabel><Fit w={57}>Destinação:</Fit></RowLabel><Box $w={92}><Words><Spacer $w={2} /><Fit w={40}>Nenhum</Fit></Words><Drop><Chevron /></Drop></Box></DialogRow>
          <DialogRow $h={17} $gap={14}><RowLabel><Fit w={43}>Âncoras:</Fit></RowLabel><Box $w={43}><Words><Spacer $w={2} /><Fit w={17}>----</Fit></Words><Drop><Chevron /></Drop></Box></DialogRow>
          <Rule />
          <Buttons><Button><Fit w={53}>Procurar...</Fit></Button><Button><Fit w={14}>OK</Fit></Button><Button><Fit w={42}>Cancelar</Fit></Button></Buttons>
          <DialogStatus><Fit w={46}>Concluído</Fit><Spacer /><StatusIcon /></DialogStatus>
        </DialogBody>
      </Dialog>
      <Marks width="1024" height="768" fill="none" stroke="#d01212" strokeWidth="2">
        <ellipse cx="552" cy="392" rx="186.500" ry="28" />
        <ellipse cx="615" cy="494.500" rx="44" ry="28" />
      </Marks>
    </Desktop>
  );
}

function EditorTop() {
  return (
    <>
      <Tools $w={608} $h={25}>
        <FontBox><Fit w={49}>Trebuchet</Fit></FontBox>
        <Spacer $w={407} /><Divider /><Spacer $w={7} />
        <Svg w={14} h={13}><path d="M5 1.500h8.500v11H5z" fill="#fff" stroke="#889" /><rect width="10" height="10" fill="#8792be" /><path d="M1.500 2.500l2 5L5 3l1.500 4.500 2-5" stroke="#28346f" strokeWidth="1.300" /></Svg>
        <Spacer $w={8} /><Divider /><Spacer $w={8} />
        <Svg w={13} h={11}><path d="M1 1v6h6z" fill="#101070" /><path d="M3 5c3-5 9-4.500 9-1 0 1.500-1 3-2 4" stroke="#101070" strokeWidth="1.200" /></Svg>
        <Spacer $w={8} />
        <Svg w={13} h={11}><path d="M12 1v6H6z" fill="#101070" /><path d="M10 5c-3-5-9-4.500-9-1 0 1.500 1 3 2 4" stroke="#101070" strokeWidth="1.200" /></Svg>
      </Tools>
      <Tools $w={599} $h={29} $pad={4}>
        <Spacer $w={1} />
        <AlignButton $on><AlignIcon rows={LEFT} /></AlignButton>
        <AlignButton><AlignIcon rows={MID} /></AlignButton>
        <AlignButton><AlignIcon rows={RIGHT} /></AlignButton>
        <AlignButton><AlignIcon rows={FULL} /></AlignButton>
        <Spacer $w={2} /><Divider /><Spacer $w={435} /><Divider /><Spacer $w={7} />
        <Svg w={14} h={10}><path d="M5.500 1l-4 4 4 4M8.500 1l4 4-4 4" stroke="#000" strokeWidth="1.400" /></Svg>
        <Spacer $w={7} /><Divider /><Spacer $w={6} />
        <Svg w={16}><path d="M4.500 11.500v-11h11v11zM4 4.500H.5v11h11V12" stroke="#000" /><path d="M3 13l9-9M6.500 3h6.500v6.500" stroke="#000" strokeWidth="2" /></Svg>
      </Tools>
      <Paper>
        <Line $h={22} $w={545}><Fit w={89} size={15} face={trebuchet}>Às vezes, po</Fit><Fit w={36} size={15} face={trebuchet}>ersas</Fit></Line>
        <Line $h={22} $gap={23}><Fit w={86} size={15} face={trebuchet}>maneiras de</Fit></Line>
        <Line $h={18} $pad={80} $w={579}><Fit w={12} size={12.5} face={trebuchet}>Vi</Fit><Fit w={61} size={12.5} face={trebuchet}>pet. Santa</Fit></Line>
        <Line $h={18} $pad={80} $w={545}><Fit w={14} size={12.5} face={trebuchet}>ec</Fit><Fit w={30} size={12.5} face={trebuchet}>.com</Fit></Line>
        <Line $h={18} $pad={80} $gap={21}><Fit w={6} size={12.5} face={trebuchet}>/</Fit></Line>
        <Line $h={22} $w={569}><Fit w={92} size={15} face={trebuchet}>É evidente q</Fit><Fit w={54} size={15} face={trebuchet}>de site.</Fit></Line>
        <Line $h={22} $gap={23}><Fit w={92} size={15} face={trebuchet}>Existe uma d</Fit></Line>
        <Line $h={18} $pad={80}><Fit w={498} size={12.5} face={trebuchet}>Vi uma notícia de que, na Tailância, construíram um templo com garrafas pet. Santa</Fit></Line>
        <Line $h={18} $pad={80}>
          <Words><Fit w={195} size={12.5} face={trebuchet}>ecologia! Quem quiser, pode ver </Fit><Selected><Fit w={25} size={12.5} face={trebuchet}>aqui</Fit></Selected><Fit w={4} size={12.5} face={trebuchet}>.</Fit></Words>
        </Line>
      </Paper>
    </>
  );
}
